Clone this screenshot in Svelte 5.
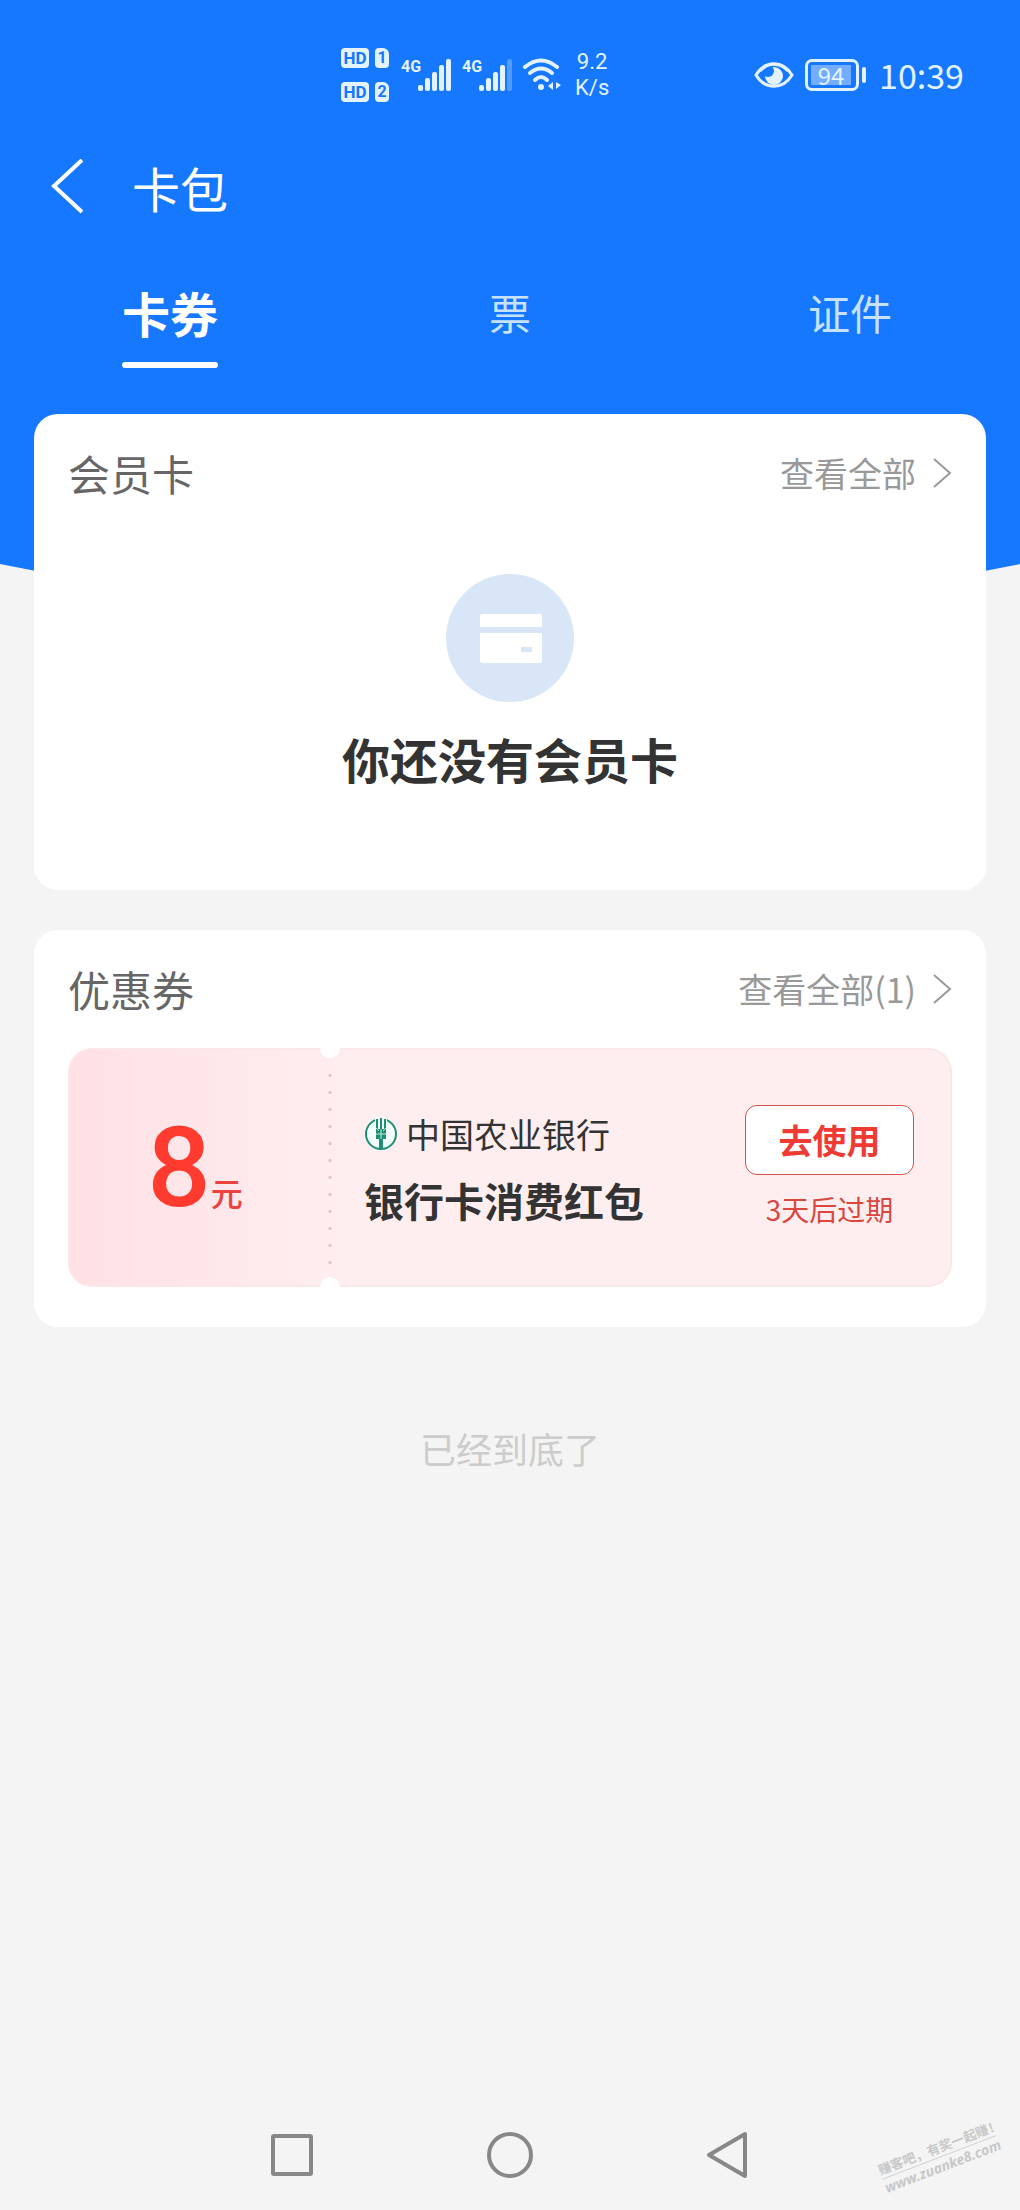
<script lang="ts">
  type Tab = { id: string; label: string };

  const tabs: Tab[] = [
    { id: 'cards', label: '卡券' },
    { id: 'tickets', label: '票' },
    { id: 'papers', label: '证件' }
  ];
  const signals = [
    { id: 1, level: 5 },
    { id: 2, level: 4 }
  ];
  const coupons = [
    { amount: 8, unit: '元', bank: '中国农业银行', name: '银行卡消费红包', expires: '3天后过期' }
  ];

  let active = $state('cards');
</script>

{#snippet chevron()}
  <svg class="chevron" viewBox="0 0 20 30" aria-hidden="true">
    <path d="M2 1 L18 15 L2 29" fill="none" stroke="currentColor" stroke-width="2" />
  </svg>
{/snippet}

<div class="page">
  <svg class="backdrop" viewBox="0 0 1020 620" preserveAspectRatio="none" aria-hidden="true">
    <path d="M0 0 H1020 V564 Q510 670 0 564 Z" fill="#1677ff" />
  </svg>

  <div class="status">
    <div class="sims">
      {#each signals as sim (sim.id)}
        <div class="sim">
          <span class="hd">HD</span>
          <span class="slot">{sim.id}</span>
        </div>
      {/each}
    </div>
    {#each signals as sim (sim.id)}
      <div class="signal">
        <span>4G</span>
        <svg width="34" height="32" viewBox="0 0 34 32" aria-hidden="true">
          {#each [6, 13, 19, 26, 32] as h, i}
            <rect x={i * 7} y={32 - h} width="5" height={h} rx="2" fill="#e2f3ff" opacity={i < sim.level ? 1 : 0.3} />
          {/each}
        </svg>
      </div>
    {/each}
    <svg class="wifi" width="40" height="34" viewBox="0 0 40 34" aria-hidden="true">
      <g fill="none" stroke="#e2f3ff" stroke-width="4" stroke-linecap="round">
        <path d="M2 9 Q18 -4 34 9" />
        <path d="M7 15 Q18 6 29 15" />
        <path d="M12 22 Q18 16 24 22" />
      </g>
      <circle cx="18" cy="29" r="3" fill="#e2f3ff" />
      <path d="M30 24 V32 L25 28 Z M33 24 L38 27 L33 31 Z" fill="#e2f3ff" />
    </svg>
    <div class="speed"><span>9.2</span><span>K/s</span></div>

    <div class="right">
      <svg width="40" height="28" viewBox="0 0 40 28" aria-hidden="true">
        <path d="M2 14 C11 -1 29 -1 38 14 C29 29 11 29 2 14 Z" fill="none" stroke="#e2f3ff" stroke-width="3" />
        <circle cx="20" cy="15" r="9" fill="#e2f3ff" />
        <circle cx="14" cy="10" r="6" fill="#1677ff" />
        <path d="M6 10 C14 1 26 1 34 10" fill="none" stroke="#e2f3ff" stroke-width="3" />
      </svg>
      <div class="battery"><span>94</span></div>
      <time>10:39</time>
    </div>
  </div>

  <header>
    <button class="back" aria-label="返回">
      <svg width="34" height="56" viewBox="0 0 34 56" aria-hidden="true">
        <path d="M32 1 L4 27 L32 53" fill="none" stroke="#fff" stroke-width="4" />
      </svg>
    </button>
    <h1>卡包</h1>
  </header>

  <nav class="tabs">
    {#each tabs as tab (tab.id)}
      <button class:active={active === tab.id} onclick={() => (active = tab.id)}>
        <span>{tab.label}</span>
      </button>
    {/each}
  </nav>

  <main>
    <section class="card">
      <div class="card-head">
        <h2>会员卡</h2>
        <a href="#members">查看全部{@render chevron()}</a>
      </div>
      <div class="empty">
        <svg width="128" height="128" viewBox="0 0 128 128" aria-hidden="true">
          <circle cx="64" cy="64" r="64" fill="#d9e6f7" />
          <path d="M34 42 a2 2 0 0 1 2 -2 H94 a2 2 0 0 1 2 2 V53 H34 Z" fill="#fff" />
          <path d="M34 59 H96 V87 a2 2 0 0 1 -2 2 H36 a2 2 0 0 1 -2 -2 Z" fill="#fff" />
          <rect x="75" y="73" width="11" height="5" fill="#d9e6f7" />
        </svg>
        <p>你还没有会员卡</p>
      </div>
    </section>

    <section class="card">
      <div class="card-head">
        <h2>优惠券</h2>
        <a href="#coupons">查看全部({coupons.length}){@render chevron()}</a>
      </div>
      {#each coupons as coupon}
        <div class="coupon">
          <div class="amount">
            <strong>{coupon.amount}</strong><span>{coupon.unit}</span>
          </div>
          <div class="tear"></div>
          <div class="info">
            <div class="bank">
              <svg width="34" height="34" viewBox="0 0 34 34" aria-hidden="true">
                <circle cx="17" cy="17" r="15" fill="#f4fffb" stroke="#1f8f74" stroke-width="2" />
                <path d="M11 0 H23 V5 H11 Z" fill="#f4fffb" />
                <path d="M16 1 H18 V12 H16 Z M12 2 H14 V12 H20 V2 H22 V22 H19 V32 H15 V22 H12 Z" fill="#1f8f74" />
                <path d="M12 17 H22 M17 12 V22 M12 11 L15 14 M22 11 L19 14" stroke="#bfe8dc" stroke-width="1" />
              </svg>
              <span>{coupon.bank}</span>
            </div>
            <p class="name">{coupon.name}</p>
          </div>
          <div class="action">
            <button>去使用</button>
            <span>{coupon.expires}</span>
          </div>
        </div>
      {/each}
    </section>

    <p class="end">已经到底了</p>
  </main>

  <footer>
    <button aria-label="最近任务">
      <svg width="48" height="48" viewBox="0 0 48 48"><rect x="5" y="5" width="38" height="38" rx="1" /></svg>
    </button>
    <button aria-label="主页">
      <svg width="48" height="48" viewBox="0 0 48 48"><circle cx="24" cy="24" r="21" /></svg>
    </button>
    <button aria-label="后退">
      <svg width="48" height="48" viewBox="0 0 48 48"><path d="M41 3 V45 L5 24 Z" /></svg>
    </button>
  </footer>

  <div class="watermark">
    <span>赚客吧，有奖一起赚！</span>
    <span class="site">www.zuanke8.com</span>
  </div>
</div>

<style>
  :global(body) {
    background: #f4f4f4;
  }
  .page {
    position: relative;
    display: flex;
    flex-direction: column;
    min-height: 100vh;
    overflow: hidden;
    color: #333;
    font-family: "Noto Sans CJK SC", "Noto Sans", sans-serif;
  }
  .page > * {
    position: relative;
  }
  .page > .backdrop {
    position: absolute;
    top: 0;
    left: 0;
    width: 100%;
    height: 620px;
  }
  h1, h2, p {
    margin: 0;
    font-weight: 400;
  }
  button {
    padding: 0;
    border: none;
    background: none;
    font-family: inherit;
    cursor: pointer;
  }
  svg {
    display: block;
    flex: none;
  }

  .status {
    display: flex;
    align-items: center;
    height: 150px;
    padding: 0 56px 0 341px;
    color: #e2f3ff;
    box-sizing: border-box;
  }
  .sims {
    display: flex;
    flex-direction: column;
    gap: 14px;
    margin-right: 12px;
  }
  .sim {
    display: flex;
    gap: 6px;
  }
  .hd, .slot {
    height: 20px;
    border-radius: 4px;
    background: #e2f3ff;
    color: #1677ff;
    font: 700 17px/20px Roboto, sans-serif;
    text-align: center;
  }
  .hd {
    width: 28px;
  }
  .slot {
    width: 14px;
    border-top-right-radius: 6px;
    font-size: 16px;
  }
  .signal {
    display: flex;
    align-items: flex-start;
    margin-right: 10px;
  }
  .signal span {
    width: 17px;
    font: 700 16px/16px Roboto, sans-serif;
  }
  .speed {
    display: flex;
    flex-direction: column;
    margin-left: 12px;
    font: 400 22px/26px Roboto, sans-serif;
    text-align: center;
  }
  .right {
    display: flex;
    align-items: center;
    margin-left: auto;
  }
  .battery {
    position: relative;
    width: 54px;
    height: 32px;
    margin: 0 20px 0 11px;
    padding: 3px;
    border: 3px solid #e2f3ff;
    border-radius: 7px;
    box-sizing: border-box;
  }
  .battery span {
    display: block;
    width: 40px;
    background: #74adff;
    font-size: 24px;
    line-height: 20px;
    text-align: center;
  }
  .battery::after {
    content: "";
    position: absolute;
    top: 5px;
    right: -10px;
    width: 4px;
    height: 16px;
    border-radius: 2px;
    background: #e2f3ff;
  }
  time {
    font-size: 34px;
    line-height: 40px;
  }

  header {
    display: flex;
    align-items: center;
    gap: 48px;
    height: 74px;
    padding: 0 50px;
  }
  h1 {
    color: #fff;
    font-size: 48px;
    line-height: 74px;
  }

  .tabs {
    display: grid;
    grid-template-columns: repeat(3, 1fr);
    height: 190px;
  }
  .tabs button {
    display: flex;
    justify-content: center;
    align-items: flex-start;
    padding-top: 36px;
    color: #c5e2ff;
    font-size: 42px;
    line-height: 104px;
  }
  .tabs span {
    height: 102px;
    border-bottom: 6px solid transparent;
  }
  .tabs .active {
    color: #fff;
    font-size: 48px;
    font-weight: 700;
  }
  .tabs .active span {
    position: relative;
  }
  .tabs .active span::after {
    content: "";
    position: absolute;
    right: 0;
    bottom: -6px;
    left: 0;
    height: 6px;
    border-radius: 3px;
    background: #fff;
  }

  main {
    display: flex;
    flex-direction: column;
    gap: 40px;
    padding: 0 34px;
  }
  .card {
    padding: 0 34px 40px;
    border-radius: 24px;
    background: #fff;
  }
  .card-head {
    display: flex;
    justify-content: space-between;
    align-items: center;
    height: 118px;
  }
  h2 {
    color: #666;
    font-size: 42px;
    line-height: 60px;
  }
  .card-head a {
    display: flex;
    align-items: center;
    gap: 16px;
    color: #999;
    font-size: 34px;
    line-height: 60px;
    text-decoration: none;
  }
  .chevron {
    width: 20px;
    height: 30px;
  }
  .empty {
    display: flex;
    flex-direction: column;
    align-items: center;
    gap: 20px;
    padding: 42px 0 56px;
  }
  .empty p {
    font-size: 48px;
    font-weight: 700;
    line-height: 72px;
  }

  .coupon {
    display: flex;
    align-items: center;
    height: 239px;
    border: 2px solid #fbe6e8;
    border-radius: 24px;
    background: linear-gradient(90deg, #ffe0e4, #feeef0 32%);
    background-origin: border-box;
    box-sizing: border-box;
  }
  .amount {
    display: flex;
    justify-content: center;
    align-items: baseline;
    width: 250px;
    color: #ff3b30;
  }
  .amount strong {
    font: 500 112px/120px Roboto, sans-serif;
  }
  .amount span {
    font-size: 32px;
    font-weight: 500;
    color: #ec4240;
  }
  .tear {
    position: relative;
    align-self: stretch;
    width: 20px;
    /* one dot every 17px between the two notches */
    background: radial-gradient(circle, #e3bcc4 1px, transparent 2px) 0 17px / 20px 17px;
    background-clip: content-box;
    padding: 17px 0 16px;
  }
  .tear::before,
  .tear::after {
    content: "";
    position: absolute;
    left: 0;
    width: 20px;
    height: 10px;
    background: #fff;
  }
  .tear::before {
    top: -2px;
    border-radius: 0 0 10px 10px;
  }
  .tear::after {
    bottom: -2px;
    border-radius: 10px 10px 0 0;
  }
  .info {
    flex: 1;
    padding: 4px 0 0 24px;
  }
  .bank {
    display: flex;
    align-items: center;
    gap: 8px;
    font-size: 34px;
    line-height: 60px;
  }
  .name {
    font-size: 40px;
    font-weight: 700;
    line-height: 72px;
  }
  .action {
    display: flex;
    flex-direction: column;
    align-items: center;
    gap: 12px;
    margin-right: 36px;
    color: #d9483f;
    font-size: 28px;
    line-height: 44px;
  }
  .action button {
    width: 169px;
    height: 70px;
    border: 1px solid #d5504c;
    border-radius: 12px;
    background: #fff;
    color: #f03a34;
    font-size: 34px;
    font-weight: 700;
  }
  .end {
    padding-top: 54px;
    color: #ccc;
    font-size: 36px;
    line-height: 54px;
    text-align: center;
  }

  footer {
    display: grid;
    grid-template-columns: repeat(3, 218px);
    justify-content: center;
    justify-items: center;
    margin-top: auto;
    padding-bottom: 31px;
  }
  footer svg {
    fill: none;
    stroke: #888;
    stroke-width: 4;
    stroke-linejoin: round;
  }
  .page > .watermark {
    position: absolute;
    right: 20px;
    bottom: 34px;
    display: flex;
    flex-direction: column;
    width: 122px;
    color: #c8c8c8;
    font-size: 13px;
    font-weight: 700;
    line-height: 18px;
    white-space: nowrap;
    transform: rotate(-21deg);
  }
  .site {
    border-top: 1px solid #ccc;
    font: italic 700 14px/18px "Noto Sans", sans-serif;
  }
</style>
